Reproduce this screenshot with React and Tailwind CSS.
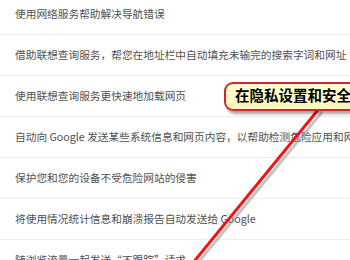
const rows = [
  '使用网络服务帮助解决导航错误',
  '借助联想查询服务，帮您在地址栏中自动填充未输完的搜索字词和网址',
  '使用联想查询服务更快速地加载网页',
  '自动向 Google 发送某些系统信息和网页内容，以帮助检测危险应用和网站',
  '保护您和您的设备不受危险网站的侵害',
  '将使用情况统计信息和崩溃报告自动发送给 Google',
  '随浏览流量一起发送“不跟踪”请求',
];

export default function App() {
  return (
    <div className="relative w-[350px] h-[260px] overflow-hidden bg-white">
      {/* Settings list */}
      <div className="-mt-[6px]">
        {rows.map((text) => (
          <div
            key={text}
            className="h-[41px] flex items-center pl-[15px] border-b border-[#ececec] whitespace-nowrap text-[10.7px] text-[#505050]"
            style={{ fontFamily: '"Noto Sans CJK SC", "Liberation Sans", sans-serif' }}
          >
            {text}
          </div>
        ))}
      </div>

      {/* Arrow */}
      <svg className="absolute inset-0" width="350" height="260">
        <line x1="322" y1="112" x2="197" y2="264" stroke="#8a8a8a" strokeOpacity="0.5" strokeWidth="3" />
        <line x1="318" y1="110" x2="192" y2="264" stroke="#ee1515" strokeWidth="3" />
      </svg>

      {/* Callout */}
      <div className="absolute left-[224px] top-[82px] w-[170px] h-[29px] rounded-[9px] border-2 border-[#cc2a2a] bg-gradient-to-b from-[#ffffd8] to-[#fff6b8] shadow-[2px_3px_3px_rgba(0,0,0,0.35)] flex items-center pl-[9px] pt-[1px]">
        <span
          className="text-[14.5px] font-bold text-black whitespace-nowrap"
          style={{ fontFamily: '"Liberation Serif", "Noto Sans CJK SC", serif' }}
        >
          在隐私设置和安全性
        </span>
      </div>
    </div>
  );
}
